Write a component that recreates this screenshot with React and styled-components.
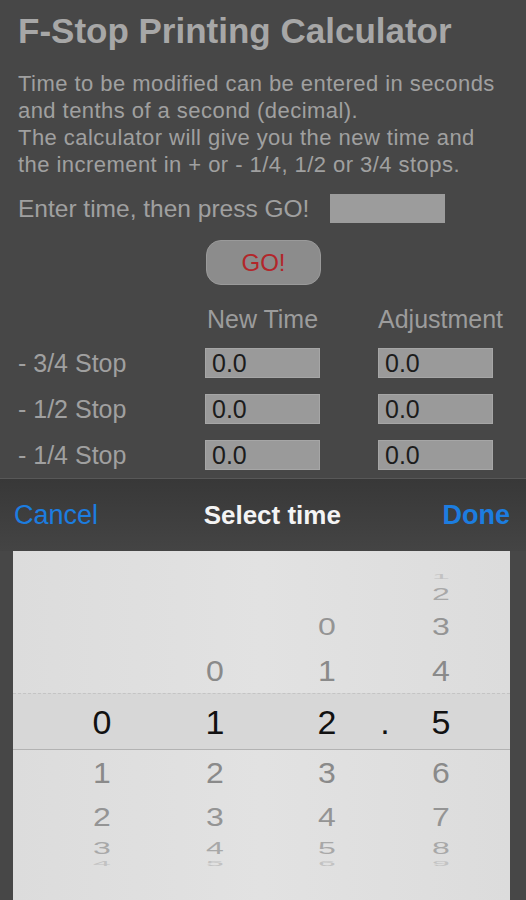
import React from 'react';
import styled, { createGlobalStyle } from 'styled-components';

const GlobalStyle = createGlobalStyle`
  html, body {
    margin: 0;
    padding: 0;
    background: #474747;
  }
  body {
    font-family: "Liberation Sans", Arial, sans-serif;
  }
`;

const stops = ['- 3/4 Stop', '- 1/2 Stop', '- 1/4 Stop'];

// picker wheel columns: selected digit per column, null for the separator
const wheels = [
  { value: 0, width: 96 },
  { value: 1, width: 130 },
  { value: 2, width: 94 },
  { value: null, width: 22 },
  { value: 5, width: 90 }
];

const slots = [
  { offset: -4, height: 12, scale: 0.2, color: '#c2c2c2' },
  { offset: -3, height: 22, scale: 0.5, color: '#a8a8a8' },
  { offset: -2, height: 43, scale: 0.72, color: '#949494' },
  { offset: -1, height: 45, scale: 0.9, color: '#8a8a8a' },
  { offset: 0, height: 57, scale: 1, color: '#111' },
  { offset: 1, height: 46, scale: 0.95, color: '#8a8a8a' },
  { offset: 2, height: 42, scale: 0.78, color: '#949494' },
  { offset: 3, height: 20, scale: 0.5, color: '#a8a8a8' },
  { offset: 4, height: 12, scale: 0.2, color: '#c2c2c2' }
];

const Screen = styled.div`
  display: flex;
  flex-direction: column;
  height: 900px;
  overflow: hidden;
  background: #474747;
`;

const Form = styled.div`
  height: 478px;
  flex: none;
  padding: 11px 18px 0 18px;
  box-sizing: border-box;
  display: flex;
  flex-direction: column;
`;

const Title = styled.h1`
  margin: 0;
  font-size: 35px;
  line-height: 40px;
  font-weight: bold;
  color: #a7a7a7;
`;

const Intro = styled.div`
  margin-top: 19px;
  font-size: 22px;
  line-height: 27px;
  letter-spacing: 0.45px;
  color: #a0a0a0;
`;

const IntroLine = styled.div`
  white-space: nowrap;
`;

const EnterRow = styled.div`
  margin-top: 16px;
  display: flex;
  align-items: center;
  gap: 21px;
  height: 29px;
`;

const EnterText = styled.span`
  font-size: 24.5px;
  color: #a0a0a0;
  white-space: nowrap;
`;

const TimeInput = styled.div`
  width: 115px;
  height: 29px;
  background: #9c9c9c;
`;

const GoButton = styled.button`
  align-self: center;
  margin: 17px 0 0 1px;
  width: 115px;
  height: 45px;
  border-radius: 15px;
  border: 1px solid #9a9a9a;
  background: #8c8c8c;
  color: #b3262a;
  font-family: "Liberation Sans", Arial, sans-serif;
  font-size: 24px;
  padding: 0;
`;

const Table = styled.div`
  margin-top: 19px;
  display: grid;
  grid-template-columns: 187px 115px 173px;
  row-gap: 16px;
  align-items: center;
`;

const HeadCell = styled.div`
  width: 115px;
  justify-self: ${(p) => (p.$end ? 'end' : 'start')};
  font-size: 25px;
  line-height: 30px;
  color: #9c9c9c;
  text-align: center;
  white-space: nowrap;
  margin-bottom: -2px;
`;

const StopLabel = styled.div`
  font-size: 25px;
  color: #a0a0a0;
  white-space: nowrap;
`;

const ValueBox = styled.div`
  width: 115px;
  justify-self: ${(p) => (p.$end ? 'end' : 'start')};
  height: 30px;
  box-sizing: border-box;
  padding-left: 6px;
  background: #9a9a9a;
  border: 1px solid #a6a6a6;
  font-size: 25px;
  line-height: 29px;
  color: #1c1c1c;
`;

const Toolbar = styled.div`
  height: 73px;
  flex: none;
  box-sizing: border-box;
  border-top: 1px solid #585858;
  background: linear-gradient(#383838, #444444);
  display: flex;
  align-items: center;
  justify-content: space-between;
  padding: 0 16px 0 14px;
`;

const BarButton = styled.span`
  font-size: 27px;
  color: #1c7de0;
  font-weight: ${(p) => (p.$bold ? 'bold' : 'normal')};
`;

const BarTitle = styled.span`
  font-size: 26px;
  font-weight: bold;
  color: #f4f4f4;
  margin-left: 4px;
`;

const Picker = styled.div`
  flex: 1;
  margin: 0 16px 0 13px;
  padding-top: 20px;
  background: linear-gradient(90deg, #dcdcdc, #e2e2e2 50%, #dcdcdc);
`;

const SlotRow = styled.div`
  display: flex;
  padding-left: 41px;
  height: ${(p) => p.$height}px;
  box-sizing: border-box;
  ${(p) =>
    p.$selected &&
    `
    border-top: 1px dashed #c4c4c4;
    border-bottom: 1px solid #b2b2b2;
    background: #d7d7d7;
  `}
`;

const Cell = styled.div`
  flex: none;
  display: flex;
  align-items: center;
  justify-content: center;
  font-size: ${(p) => (p.$selected ? 34 : 32)}px;
  color: ${(p) => p.$color};
  line-height: 1;
`;

const Digit = styled.span`
  display: inline-block;
  transform: scaleY(${(p) => p.$scale});
`;

const App = () => (
  <>
    <GlobalStyle />
    <Screen>
      <Form>
        <Title>F-Stop Printing Calculator</Title>
        <Intro>
          <IntroLine>Time to be modified can be entered in seconds</IntroLine>
          <IntroLine>and tenths of a second (decimal).</IntroLine>
          <IntroLine>The calculator will give you the new time and</IntroLine>
          <IntroLine>the increment in + or - 1/4, 1/2 or 3/4 stops.</IntroLine>
        </Intro>
        <EnterRow>
          <EnterText>Enter time, then press GO!</EnterText>
          <TimeInput />
        </EnterRow>
        <GoButton>GO!</GoButton>
        <Table>
          <span />
          <HeadCell>New Time</HeadCell>
          <HeadCell $end>Adjustment</HeadCell>
          {stops.map((stop) => (
            <React.Fragment key={stop}>
              <StopLabel>{stop}</StopLabel>
              <ValueBox>0.0</ValueBox>
              <ValueBox $end>0.0</ValueBox>
            </React.Fragment>
          ))}
        </Table>
      </Form>
      <Toolbar>
        <BarButton>Cancel</BarButton>
        <BarTitle>Select time</BarTitle>
        <BarButton $bold>Done</BarButton>
      </Toolbar>
      <Picker>
        {slots.map((slot) => (
          <SlotRow key={slot.offset} $height={slot.height} $selected={slot.offset === 0}>
            {wheels.map((wheel, i) => {
              let text = '';
              if (wheel.value === null) {
                text = slot.offset === 0 ? '.' : '';
              } else if (wheel.value + slot.offset >= 0) {
                text = String(wheel.value + slot.offset);
              }
              return (
                <Cell
                  key={i}
                  style={{ width: wheel.width }}
                  $selected={slot.offset === 0}
                  $color={slot.color}
                >
                  <Digit $scale={slot.scale}>{text}</Digit>
                </Cell>
              );
            })}
          </SlotRow>
        ))}
      </Picker>
    </Screen>
  </>
);

export default App;
